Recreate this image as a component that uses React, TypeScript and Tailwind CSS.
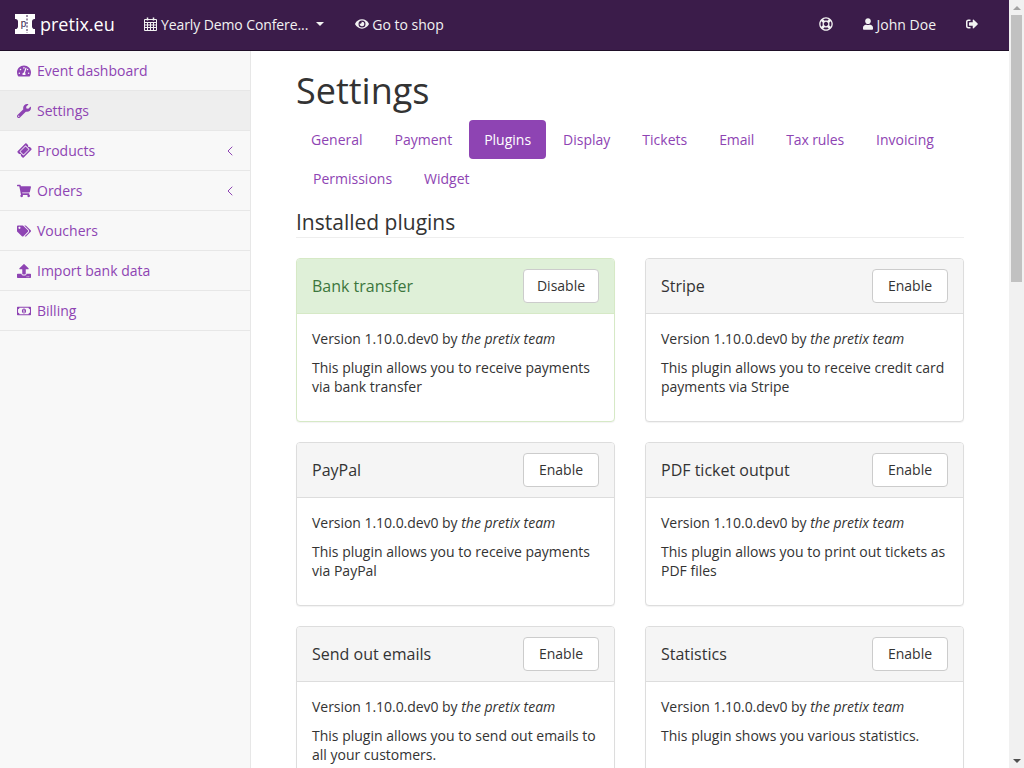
import { ChevronLeft } from 'lucide-react'
import {
  FaEye,
  FaRegLifeRing,
  FaRegMoneyBillAlt,
  FaShoppingCart,
  FaSignOutAlt,
  FaTachometerAlt,
  FaTags,
  FaTicketAlt,
  FaUpload,
  FaUser,
  FaWrench,
} from 'react-icons/fa'

const navItems = [
  { icon: FaTachometerAlt, label: 'Event dashboard' },
  { icon: FaWrench, label: 'Settings', active: true },
  { icon: FaTicketAlt, label: 'Products', sub: true, tilt: true },
  { icon: FaShoppingCart, label: 'Orders', sub: true },
  { icon: FaTags, label: 'Vouchers' },
  { icon: FaUpload, label: 'Import bank data' },
  { icon: FaRegMoneyBillAlt, label: 'Billing' },
]

const tabs = ['General', 'Payment', 'Plugins', 'Display', 'Tickets', 'Email', 'Tax rules', 'Invoicing', 'Permissions', 'Widget']

const plugins = [
  { name: 'Bank transfer', text: 'This plugin allows you to receive payments via bank transfer', enabled: true },
  { name: 'Stripe', text: 'This plugin allows you to receive credit card payments via Stripe' },
  { name: 'PayPal', text: 'This plugin allows you to receive payments via PayPal' },
  { name: 'PDF ticket output', text: 'This plugin allows you to print out tickets as PDF files' },
  { name: 'Send out emails', text: 'This plugin allows you to send out emails to all your customers.' },
  { name: 'Statistics', text: 'This plugin shows you various statistics.' },
]

function Logo() {
  return (
    <svg width="20" height="20" viewBox="0 0 20 20" className="mr-[5px] shrink-0">
      <path
        fill="#fff"
        d="M0 0h20v5a2.500 2.500 0 0 0-3 2.500v5A2.500 2.500 0 0 0 20 15v5H0v-5a2.500 2.500 0 0 0 3-2.500v-5A2.500 2.500 0 0 0 0 5z"
      />
      <text x="5.500" y="13" fontSize="10" fontFamily="'Liberation Mono', monospace" fill="#3b1c4a">
        p
      </text>
      <path d="M12 1v18" stroke="#3b1c4a" strokeWidth="1" strokeDasharray="2 1.500" />
    </svg>
  )
}

function CalendarIcon() {
  return (
    <svg width="13" height="14" viewBox="0 0 13 14" fill="none" stroke="currentColor" className="shrink-0">
      <path d="M.5 2.500h12v11H.5zM.5 5.500h12M.5 8h12M.5 10.500h12M3.500 5.500v8M6.500 5.500v8M9.500 5.500v8" />
      <path d="M3.500 .5v3M9.500 .5v3" strokeWidth="1.500" />
    </svg>
  )
}

function Plugin({ name, text, enabled }: { name: string; text: string; enabled?: boolean }) {
  return (
    <div className={`mb-5 h-[164px] overflow-hidden rounded border bg-white shadow-[0_1px_1px_rgba(0,0,0,0.05)] ${enabled ? 'border-[#d6e9c6]' : 'border-[#ddd]'}`}>
      <div className={`flex h-[55px] items-center justify-between border-b px-[15px] ${enabled ? 'border-[#d6e9c6] bg-[#dff0d8] text-[#3c763d]' : 'border-[#ddd] bg-[#f5f5f5] text-[#333]'}`}>
        <h3 className="text-base">{name}</h3>
        <button className="h-[34px] w-[76px] rounded border border-[#ccc] bg-white pb-[2px] text-[14px] text-[#333]">
          {enabled ? 'Disable' : 'Enable'}
        </button>
      </div>
      <div className="px-[15px] pt-[15px] text-[14px] leading-[19px] text-[#333]">
        <p className="mb-[10px] tracking-[-0.04px]">
          Version 1.10.0.dev0 by <em className="tracking-normal">the pretix team</em>
        </p>
        <p>{text}</p>
      </div>
    </div>
  )
}

function Scrollbar() {
  return (
    <div className="flex w-[15px] shrink-0 flex-col bg-[#f1f1f1]">
      <div className="flex h-[15px] items-center justify-center">
        <span className="h-0 w-0 border-x-[4px] border-b-[4px] border-x-transparent border-b-[#a3a3a3]" />
      </div>
      <div className="mx-[2px] h-[267px] bg-[#c1c1c1]" />
      <div className="flex-1" />
      <div className="flex h-[15px] items-center justify-center">
        <span className="h-0 w-0 border-x-[4px] border-t-[4px] border-x-transparent border-t-[#505050]" />
      </div>
    </div>
  )
}

export default function App() {
  return (
    <div className="flex h-screen overflow-hidden bg-white font-['Open_Sans',sans-serif] text-[14px] text-[#333]">
      <div className="flex min-w-0 flex-1 flex-col">
        {/* Top bar */}
        <nav className="flex h-[51px] shrink-0 items-center border-b border-[#1f0f28] bg-[#3b1c4a] pb-[2px] pl-[15px] text-[#f2f2f2]">
          <a className="flex w-[129px] items-center text-[18px] text-white">
            <Logo />
            pretix.eu
          </a>
          <a className="flex items-center gap-1 tracking-[-0.1px]">
            <CalendarIcon />
            Yearly Demo Confere...
            <span className="ml-[4px] h-0 w-0 border-x-4 border-t-4 border-x-transparent border-t-[#f2f2f2]" />
          </a>
          <a className="ml-[31px] flex items-center gap-[3px]">
            <FaEye className="h-[14px] w-[14px]" />
            Go to shop
          </a>
          <div className="ml-auto flex items-center pr-[31px]">
            <FaRegLifeRing className="mr-[30px] h-[14px] w-[14px]" />
            <a className="mr-[30px] flex items-center gap-1">
              <FaUser className="h-[12px] w-[10px]" />
              John Doe
            </a>
            <FaSignOutAlt className="h-[12px] w-[12px]" />
          </div>
        </nav>

        <div className="flex min-h-0 flex-1">
          {/* Sidebar */}
          <aside className="w-[251px] shrink-0 border-r border-[#e7e7e7] bg-[#f8f8f8]">
            {navItems.map((item) => {
              const Icon = item.icon
              return (
                <a
                  key={item.label}
                  className={`flex h-10 items-center border-b border-[#e7e7e7] pl-[17px] pr-[12px] text-[#8e44b3] ${item.active ? 'bg-[#eee]' : ''}`}
                >
                  <span className="mr-[6px] flex w-[14px] justify-center">
                    <Icon className={item.tilt ? 'h-[13px] w-[13px] -rotate-45' : 'h-[14px] w-[14px]'} />
                  </span>
                  {item.label}
                  {item.sub && <ChevronLeft strokeWidth={1.5} className="ml-auto h-4 w-4" />}
                </a>
              )
            })}
          </aside>

          {/* Content */}
          <main className="min-w-0 flex-1 px-[45px]">
            <h1 className="mb-[9px] mt-5 text-[36px] leading-[40px]">Settings</h1>
            <ul className="flex flex-wrap gap-x-[2px] text-[#8e44b3]">
              {tabs.map((tab) => (
                <li
                  key={tab}
                  className={`h-[39px] rounded px-[15px] leading-[39px] ${tab === 'Plugins' ? 'bg-[#8e44b3] text-white' : ''} ${tab === 'Permissions' ? 'ml-[2px]' : ''} ${tab === 'Email' || tab === 'Tax rules' ? 'tracking-[-0.12px]' : ''}`}
                >
                  {tab}
                </li>
              ))}
            </ul>
            <h2 className="mt-[10px] border-b border-[#eee] text-[21px] leading-[29px]">Installed plugins</h2>
            <div className="mt-5 grid grid-cols-2 gap-x-[30px]">
              {plugins.map((p) => (
                <Plugin key={p.name} {...p} />
              ))}
            </div>
          </main>
        </div>
      </div>
      <Scrollbar />
    </div>
  )
}
